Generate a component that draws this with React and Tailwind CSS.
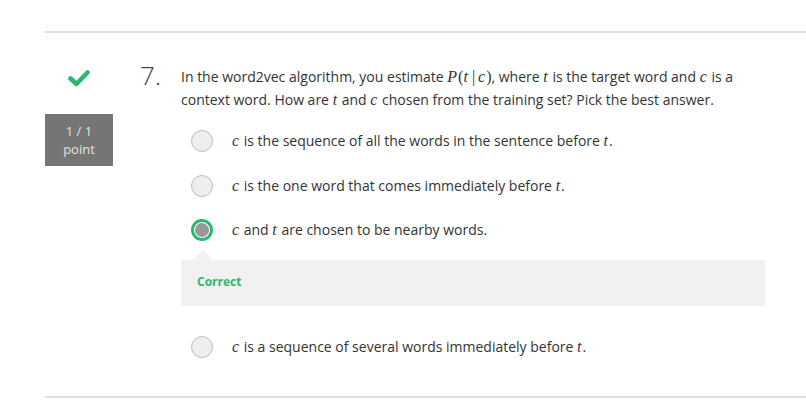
import React from "react";

const M = ({ children }) => (
  <span className="font-['Liberation_Serif',serif] italic text-[16px] pr-[1px]">{children}</span>
);
const R = ({ children, className = "" }) => (
  <span className={"font-['Liberation_Serif',serif] text-[16px] " + className}>{children}</span>
);

function Radio({ selected }) {
  if (selected) {
    return (
      <div className="w-[22px] h-[22px] rounded-full border-[3px] border-[#2bb673] bg-white flex items-center justify-center shrink-0">
        <div className="w-[14px] h-[14px] rounded-full bg-[#999999]" />
      </div>
    );
  }
  return (
    <div className="w-[22px] h-[22px] rounded-full border border-[#bdbdbd] bg-[#eeeeee] shrink-0" />
  );
}

function Option({ selected, children, className = "" }) {
  return (
    <div className={"flex items-center h-[22px] pl-[10px] " + className}>
      <Radio selected={selected} />
      <div className="ml-[19px] text-[14px] leading-[22px] text-[#333333]">{children}</div>
    </div>
  );
}

export default function App() {
  return (
    <div className="w-[806px] h-[410px] bg-white pl-[45px] pt-[31px] font-['Open_Sans',sans-serif] overflow-hidden">
      <div className="border-t-2 border-[#e0e0e0]" />
      <div className="flex h-[363px]">
        <div className="w-[68px] flex flex-col items-center">
          <svg width="22" height="17" viewBox="0 0 22 17" className="mt-[37px]">
            <polyline
              points="2.5,8.5 8.5,14 19.5,2.5"
              fill="none"
              stroke="#2bb673"
              strokeWidth="4.6"
              strokeLinecap="round"
              strokeLinejoin="round"
            />
          </svg>
          <div className="mt-[27px] w-[68px] h-[52px] bg-[#757575] text-[#e2e2e2] text-[13px] leading-[18px] flex flex-col items-center pt-[8px]">
            <div>1 / 1</div>
            <div>point</div>
          </div>
        </div>
        <div className="w-[27px]" />
        <div className="w-[41px] pt-[29px] text-[26px] leading-[26px] font-light text-[#444444]">7.</div>
        <div className="flex-1 pt-[32px]">
          <div className="text-[14px] leading-[23px] text-[#333333] w-[585px]">
            In the word2vec algorithm, you estimate <M>P</M>
            <R>(</R>
            <M>t</M>
            <R className="mx-[3px]">|</R>
            <M>c</M>
            <R>)</R>, where <M>t</M> is the target word and <M>c</M> is a context word. How are <M>t</M> and <M>c</M> chosen from the training set? Pick the best answer.
          </div>
          <Option className="mt-[19px]">
            <M>c</M> is the sequence of all the words in the sentence before <M>t</M>.
          </Option>
          <Option className="mt-[23px]">
            <M>c</M> is the one word that comes immediately before <M>t</M>.
          </Option>
          <Option className="mt-[22px]" selected>
            <M>c</M> and <M>t</M> are chosen to be nearby words.
          </Option>
          <div className="mt-[9px] w-[584px]">
            <div className="ml-[12px] w-0 h-0 border-l-[10px] border-r-[10px] border-b-[10px] border-l-transparent border-r-transparent border-b-[#f1f1f1]" />
            <div className="h-[46px] bg-[#f1f1f1] pl-[16px] pt-[13px] text-[12px] leading-[18px] font-bold text-[#2bb673]">
              Correct
            </div>
          </div>
          <Option className="mt-[30px]">
            <M>c</M> is a sequence of several words immediately before <M>t</M>.
          </Option>
        </div>
      </div>
      <div className="border-t-2 border-[#e0e0e0]" />
    </div>
  );
}
